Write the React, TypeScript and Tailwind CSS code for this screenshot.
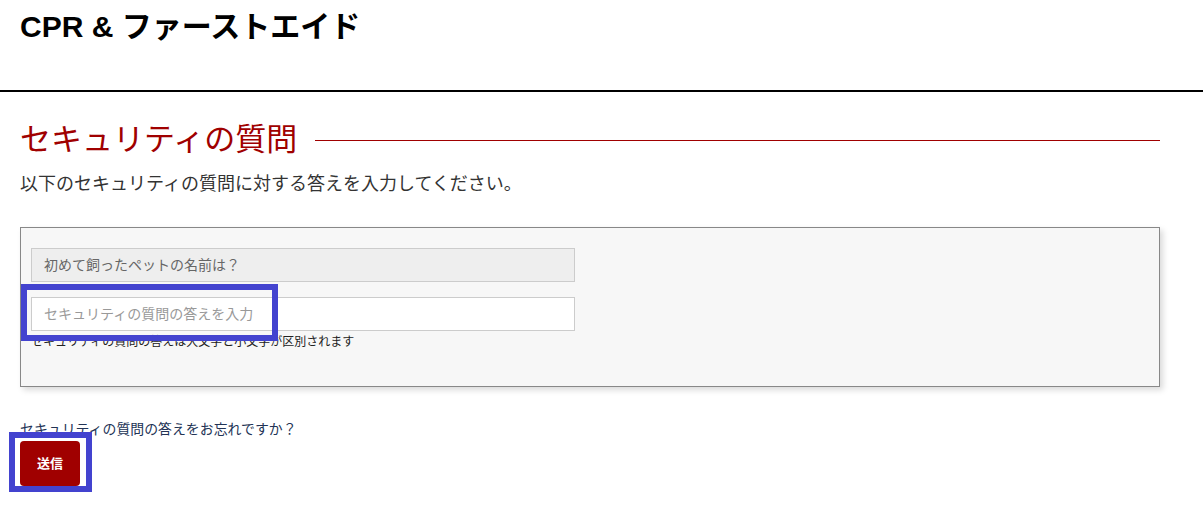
export default function App() {
  const jp = { fontFamily: '"Liberation Sans", "Noto Sans CJK JP", sans-serif' };

  return (
    <div className="relative w-[1203px] h-[516px] bg-white overflow-hidden" style={jp}>
      {/* ヘッダー */}
      <header className="h-[92px] border-b-2 border-black px-5 pt-[7px]">
        <h1 className="text-[30px] leading-[40px] font-bold text-black">CPR &amp; ファーストエイド</h1>
      </header>

      <main className="w-[1140px] ml-5">
        <div className="flex items-center gap-[18px] mt-[28px]">
          <h2 className="text-[31px] leading-[40px] text-[#a00000] font-normal whitespace-nowrap">
            セキュリティの質問
          </h2>
          <div className="flex-1 h-px bg-[#a00000]" />
        </div>
        <p className="text-[18px] leading-[28px] text-[#333] mt-[10px]">
          以下のセキュリティの質問に対する答えを入力してください。
        </p>

        <div className="mt-[29px] h-[160px] border border-[#888] bg-[#f7f7f7] shadow-[3px_3px_6px_rgba(0,0,0,0.15)] px-[10px] pt-[20px]">
          <div className="w-[544px] h-[34px] border border-[#ccc] bg-[#eee] px-3 flex items-center text-[14px] text-[#666]">
            初めて飼ったペットの名前は？
          </div>
          <input
            type="text"
            placeholder="セキュリティの質問の答えを入力"
            className="mt-[15px] w-[544px] h-[34px] border border-[#ccc] bg-white px-3 text-[14px] text-[#333] placeholder:text-[#999] outline-none"
          />
          <p className="text-[12px] leading-[16px] text-[#222] mt-[3px]">
            セキュリティの質問の答えは大文字と小文字が区別されます
          </p>
        </div>

        <a className="block mt-[33px] text-[13.9px] leading-[18px] text-[#223355]">
          セキュリティの質問の答えをお忘れですか？
        </a>
        <button className="mt-[3px] w-[60px] h-[45px] rounded-[4px] bg-[#a00000] text-white text-[13px] font-bold">
          送信
        </button>
      </main>

      {/* 注釈の枠 */}
      <div className="absolute left-[21px] top-[284px] w-[257px] h-[57px] border-[6px] border-[#4343cf] pointer-events-none" />
      <div className="absolute left-[9px] top-[432px] w-[83px] h-[60px] border-[6px] border-[#4343cf] pointer-events-none" />
    </div>
  );
}
